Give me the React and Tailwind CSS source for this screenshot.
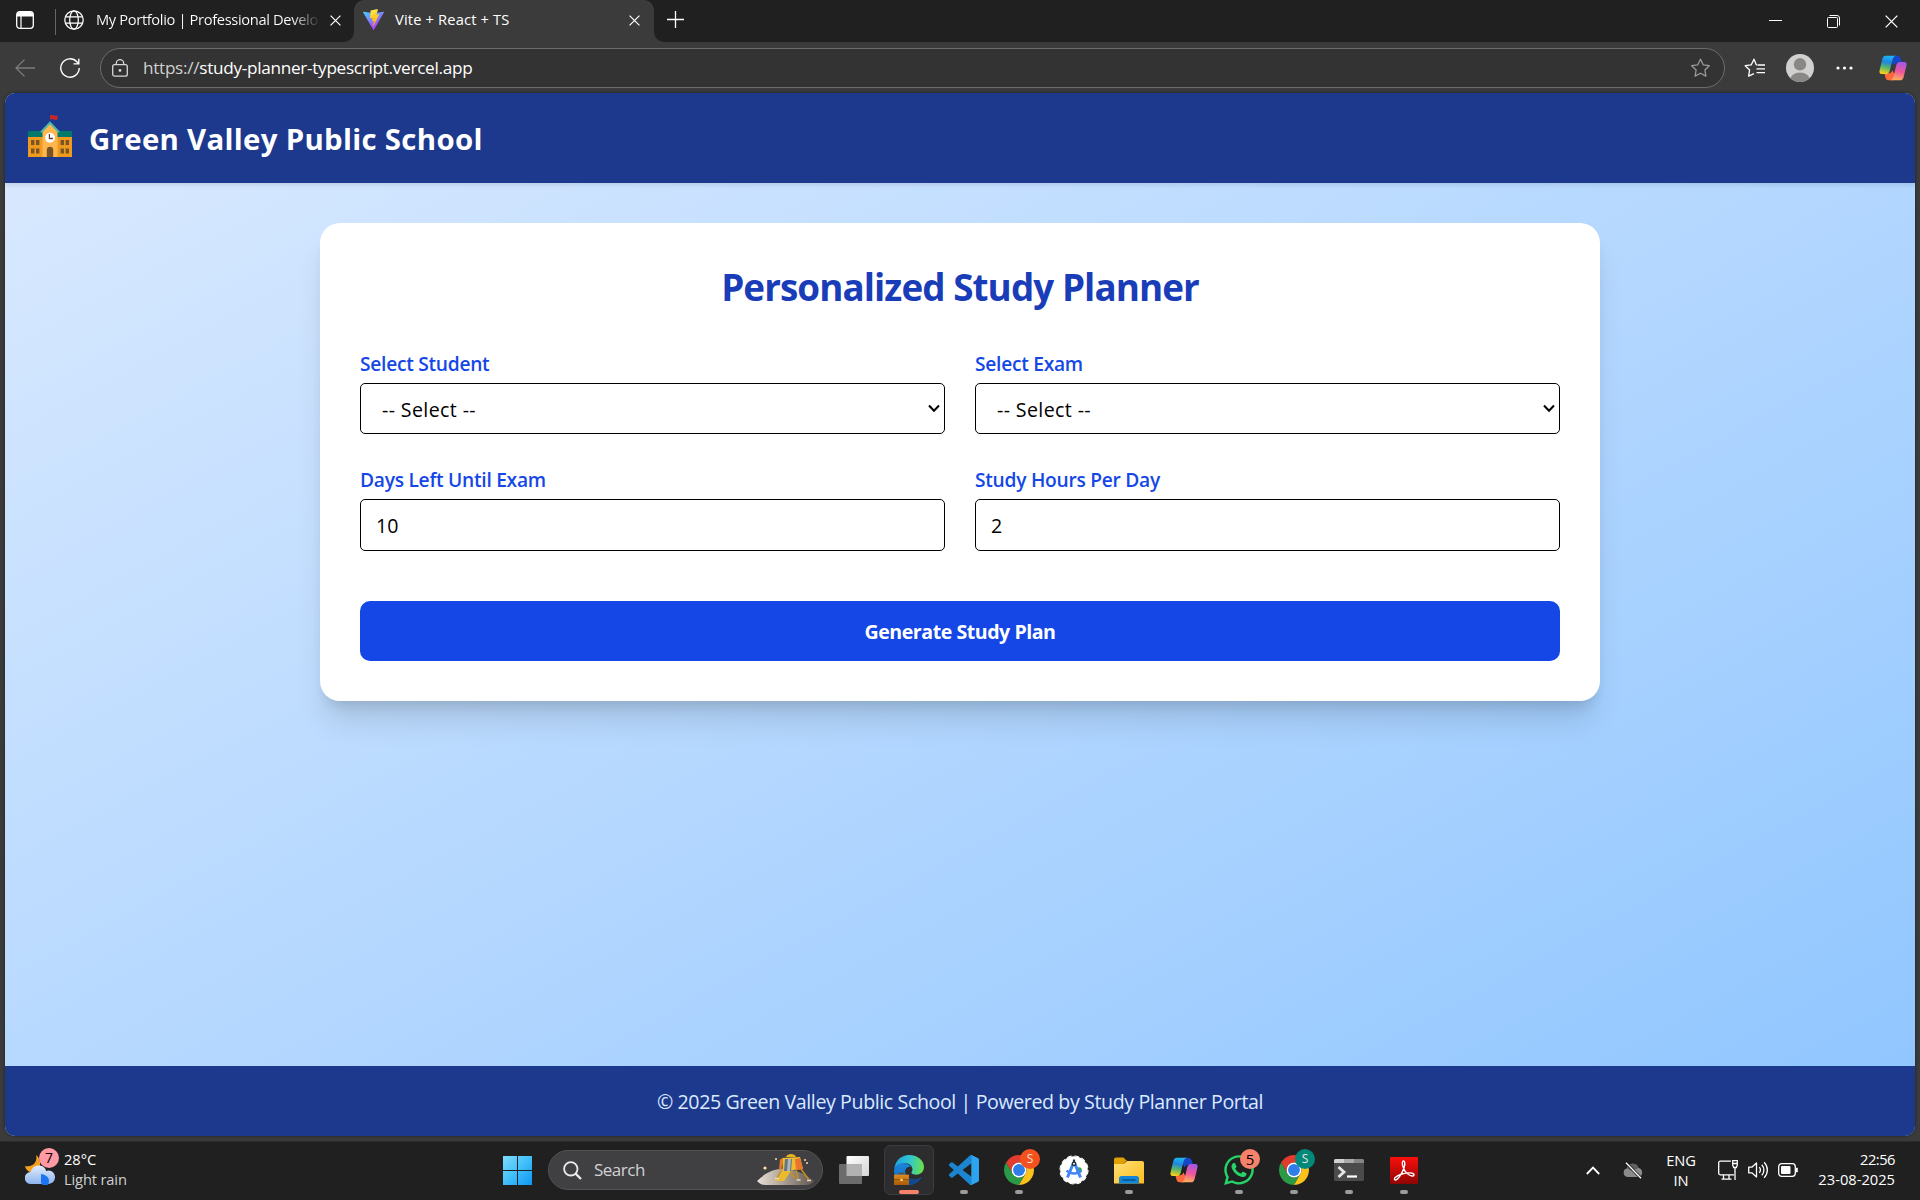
import React from 'react';
import { FaWhatsapp } from 'react-icons/fa';

function Cross({ size = 12, w = 1.3 }) {
  return (
    <svg width={size} height={size} viewBox="0 0 12 12" stroke="#fff" strokeWidth={w} fill="none">
      <path d="M.6.6l10.8 10.8M11.4.6L.6 11.4" />
    </svg>
  );
}

function ViteLogo() {
  return (
    <svg width="21" height="21" viewBox="0 0 32 32">
      <defs>
        <linearGradient id="va" x1="0" y1="0" x2=".6" y2="1"><stop offset="0" stopColor="#41d1ff" /><stop offset="1" stopColor="#bd34fe" /></linearGradient>
        <linearGradient id="vb" x1=".4" y1="0" x2=".6" y2="1"><stop offset="0" stopColor="#ffea83" /><stop offset=".2" stopColor="#ffdd35" /><stop offset="1" stopColor="#ffa800" /></linearGradient>
      </defs>
      <path fill="url(#va)" d="M31.8 5.3L16.9 31.4a.9.9 0 0 1-1.5 0L.2 5.3a.9.9 0 0 1 .9-1.3l14.9 2.6L30.900 4a.9.9 0 0 1 .9 1.300Z" />
      <path fill="url(#vb)" d="M22.300 0L11.800 2.100a.4.4 0 0 0-.3.4l-.7 11.400c0 .300.200.500.500.400l2.900-.7c.3-.1.5.200.5.500l-.9 4.300c0 .300.200.500.500.400l1.800-.5c.3-.1.6.200.5.500l-1.400 6.600c-.1.400.500.600.700.300l.1-.2 8.500-16.900c.100-.3-.1-.6-.5-.5l-3 .6c-.3 0-.5-.2-.4-.5l2-6.700c0-.3-.2-.6-.500-.5Z" />
    </svg>
  );
}

function SchoolIcon() {
  return (
    <svg width="44" height="42" viewBox="0 0 44 42">
      <path d="M22 0c2.500-.8 4 1.400 7.500.4v4.200c-3.500 1-5-1-7.500-.2Z" fill="#c62828" />
      <rect x="0" y="16" width="44" height="7" fill="#00796b" />
      <rect x="0" y="22" width="44" height="20" fill="#ef9a1f" />
      <path d="M14.500 42V15.500L22 8l7.500 7.500V42Z" fill="#ffb74d" />
      <path d="M13 17.200L22 7.800l9 9.400" fill="none" stroke="#4db6ac" strokeWidth="2" />
      <circle cx="22" cy="22.700" r="5" fill="#fff" />
      <path d="M22 19v3.700h3v1.600h-4.200V19Z" fill="#5d4037" />
      <path d="M18.800 42v-7a3.200 3.200 0 0 1 6.400 0V42Z" fill="#795526" />
      <g fill="#795526">
        <rect x="3" y="25" width="3.400" height="5" /><rect x="8" y="25" width="3.400" height="5" />
        <rect x="3" y="33.500" width="3.400" height="5" /><rect x="8" y="33.500" width="3.400" height="5" />
        <rect x="32.600" y="25" width="3.400" height="5" /><rect x="37.600" y="25" width="3.400" height="5" />
        <rect x="32.600" y="33.500" width="3.400" height="5" /><rect x="37.600" y="33.500" width="3.400" height="5" />
      </g>
    </svg>
  );
}

function Copilot({ id }) {
  return (
    <svg width="28" height="26" viewBox="0 0 84 78">
      <defs>
        <linearGradient id={id + 'l'} x1=".5" y1="0" x2=".3" y2="1"><stop offset="0" stopColor="#1eb8f2" /><stop offset=".35" stopColor="#1f86e0" /><stop offset=".65" stopColor="#5bb865" /><stop offset="1" stopColor="#ffd21a" /></linearGradient>
        <linearGradient id={id + 'r'} x1=".6" y1="0" x2=".4" y2="1"><stop offset="0" stopColor="#a457e8" /><stop offset=".5" stopColor="#f0559a" /><stop offset="1" stopColor="#ffb15a" /></linearGradient>
      </defs>
      <path d="M42 2H55C61 2 64 6 66 12L69 23H54C49 23 46 27 44 32L38 20Z" fill="#1747c8" />
      <path d="M42 76H29C23 76 20 72 19 66L16 55H30C35 55 38 51 40 46L46 58Z" fill="#ff6a3d" />
      <path d="M20 2H52C46 2 43 6 41 12L32 48C30 54 27 57 22 57H8C2 57 0 52 2 45L10 12C12 5 15 2 20 2Z" fill={`url(#${id}l)`} />
      <path d="M64 76H32C38 76 41 72 43 66L52 30C54 24 57 21 62 21H76C82 21 84 26 82 33L74 66C72 73 69 76 64 76Z" fill={`url(#${id}r)`} />
    </svg>
  );
}

function TitleBar() {
  return (
    <div className="flex h-[42px] bg-[#202020]">
      <div className="flex w-[354px] shrink-0 items-start">
        <svg className="mt-[11px] ml-4" width="18" height="18" viewBox="0 0 18 18" fill="none">
          <rect x=".7" y=".7" width="16.600" height="16.600" rx="3" stroke="#fff" strokeWidth="1.300" />
          <path d="M1 5V3.500A2.500 2.500 0 0 1 3.500 1h11A2.500 2.500 0 0 1 17 3.500V5.500H1Z" fill="#fff" />
          <path d="M5 5v12" stroke="#fff" strokeWidth="1.200" />
        </svg>
        <div className="mt-[9px] ml-[21px] h-[26px] w-px bg-[#666]" />
        <svg className="mt-[10px] ml-2" width="20" height="20" viewBox="0 0 20 20" fill="none" stroke="#fff" strokeWidth="1.250">
          <circle cx="10" cy="10" r="9.200" /><ellipse cx="10" cy="10" rx="4.300" ry="9.200" /><path d="M1.600 6.800h16.800M1.600 13.200h16.800" />
        </svg>
        <div className="mt-[9px] ml-3 w-[223px] overflow-hidden whitespace-nowrap bg-linear-to-r from-white from-88% to-[#303030] bg-clip-text text-[14.7px] leading-5 tracking-[-0.36px] text-transparent">My Portfolio | Professional Develo</div>
        <div className="mt-[15px] ml-[11px]"><Cross size={11} /></div>
      </div>
      <div className="relative flex w-[300px] shrink-0 items-start rounded-t-[10px] bg-[#3b3b3b]">
        <svg className="absolute bottom-0 -left-[10px]" width="10" height="10"><path d="M10 0v10H0A10 10 0 0 0 10 0Z" fill="#3b3b3b" /></svg>
        <svg className="absolute -right-[10px] bottom-0" width="10" height="10"><path d="M0 0v10h10A10 10 0 0 1 0 0Z" fill="#3b3b3b" /></svg>
        <div className="mt-[9px] ml-[9px]"><ViteLogo /></div>
        <div className="mt-[9px] ml-[11px] flex-1 text-[14.7px] leading-5 tracking-[0.15px] text-white">Vite + React + TS</div>
        <div className="mt-[15px] mr-[14px]"><Cross size={11} /></div>
      </div>
      <svg className="mt-[11px] ml-[13px]" width="17" height="17" viewBox="0 0 17 17" stroke="#fff" strokeWidth="1.300"><path d="M8.500 0v17M0 8.500h17" /></svg>
      <div className="ml-auto flex items-start pr-[22px]">
        <svg className="mt-[20px]" width="13" height="2"><path d="M0 .5h13" stroke="#fff" /></svg>
        <svg className="mt-[15px] ml-[45px]" width="13" height="13" viewBox="0 0 13 13" fill="none" stroke="#fff"><rect x=".5" y="2.500" width="10" height="10" rx="1" /><path d="M2.500.5H10A2.500 2.500 0 0 1 12.500 3v7.500" /></svg>
        <div className="mt-[15px] ml-[45px]"><Cross size={13} w={1.2} /></div>
      </div>
    </div>
  );
}

const STAR = 'M10 1.200l2.700 5.600 6.100.9-4.400 4.300 1 6.100L10 15.200l-5.400 2.900 1-6.100L1.200 7.700l6.100-.9Z';

function AddressBar() {
  return (
    <div className="flex h-[51px] items-center bg-[#3b3b3b]">
      <svg className="ml-[15px]" width="20" height="18" viewBox="0 0 20 18" fill="none" stroke="#7d7d7d" strokeWidth="1.300"><path d="M20 9H1M9.500.6L1 9l8.500 8.400" /></svg>
      <svg className="ml-[25px]" width="20" height="20" viewBox="0 0 20 20" fill="none" stroke="#fff" strokeWidth="1.400"><path d="M19.200 10A9.200 9.200 0 1 1 16.800 3.800L18.500 5.700M18.800.8V5.900H13.500" /></svg>
      <div className="ml-5 flex h-10 w-[1625px] items-center rounded-full border border-[#6d6d6d] bg-[#333]">
        <svg className="ml-[11px]" width="16" height="18" viewBox="0 0 16 18" fill="none" stroke="#d6d6d6" strokeWidth="1.300"><rect x=".7" y="5.700" width="14.600" height="11.500" rx="2" /><path d="M4.300 5.500V4.300a3.700 3.700 0 0 1 7.400 0v1.200" /><circle cx="8" cy="11.400" r=".8" fill="#fff" /></svg>
        <div className="ml-[15px] flex-1 text-[17.2px] leading-6 tracking-[-0.3px] text-white"><span className="text-[#cfcfcf]">https://</span>study-planner-typescript.vercel.app</div>
        <svg className="mr-[13px]" width="21" height="20" viewBox="0 0 20 20" fill="none" stroke="#9a9a9a" strokeWidth="1.300" strokeLinejoin="round"><path d={STAR} /></svg>
      </div>
      <svg className="ml-[19px]" width="21" height="20" viewBox="0 0 21 20" fill="none" stroke="#fff" strokeWidth="1.300" strokeLinejoin="round"><path d="M13 7L12.300 6.800 10 1.200 7.300 6.800l-6.100.9 4.400 4.300-1 6.100L10 15.600M13.500 7H21M12.500 10.800H21M12.500 14.600H21" /></svg>
      <svg className="ml-[21px]" width="28" height="28" viewBox="0 0 28 28"><defs><clipPath id="av"><circle cx="14" cy="14" r="14" /></clipPath></defs><circle cx="14" cy="14" r="14" fill="#d2d0ce" /><g clipPath="url(#av)" fill="#8a8886"><circle cx="14" cy="10.300" r="6.200" /><ellipse cx="14" cy="26" rx="10" ry="7.500" /></g></svg>
      <svg className="ml-[22px]" width="17" height="4" fill="#fff"><circle cx="2" cy="2" r="1.600" /><circle cx="8.500" cy="2" r="1.600" /><circle cx="15" cy="2" r="1.600" /></svg>
      <div className="ml-[26px]"><Copilot id="ct" /></div>
    </div>
  );
}

function Field({ label, children }) {
  return (
    <label className="block">
      <span className="mb-[5px] block h-[30px] pt-px text-[19.2px] leading-[30px] font-semibold tracking-[-0.27px] text-[#1447e6]">{label}</span>
      {children}
    </label>
  );
}

function SelectBox() {
  return (
    <span className="relative block h-[51px]">
      <select className="block h-full w-full appearance-none rounded-[5px] border border-black bg-white pt-[2px] pl-[21px] text-[19.6px] tracking-[0.38px] text-black outline-none">
        <option>-- Select --</option>
      </select>
      <svg className="absolute top-[21px] right-[5px]" width="12" height="9" viewBox="0 0 12 9" fill="none" stroke="#000" strokeWidth="2"><path d="M1 1.500l5 5.300 5-5.300" /></svg>
    </span>
  );
}

function NumberBox({ value }) {
  return <input className="block h-[52px] w-full rounded-[5px] border border-black bg-white px-[15px] text-[19.6px] text-black outline-none" defaultValue={value} />;
}

function Page() {
  return (
    <div className="flex h-[1048px] bg-[#3b3b3b] px-[5px] pb-[5px]">
      <div className="flex flex-1 flex-col overflow-hidden rounded-[10px] bg-linear-to-br from-[#dbeafe] to-[#8ec5ff] shadow-[0_0_3px_rgba(0,0,0,0.5)]">
        <header className="flex h-[90px] shrink-0 items-center bg-[#1c398e] pl-[23px] shadow-[0_2px_4px_rgba(0,0,0,0.1)]">
          <div className="-mt-1"><SchoolIcon /></div>
          <h1 className="mt-[2px] ml-[17px] text-[29.4px] leading-10 font-bold tracking-[0.3px] text-white">Green Valley Public School</h1>
        </header>
        <main className="flex-1 pt-10">
          <div className="mx-auto h-[478px] w-[1280px] rounded-[20px] bg-white px-10 pt-[42px] shadow-[0_25px_31px_-6px_rgba(0,0,0,0.12),0_10px_13px_-6px_rgba(0,0,0,0.12)]">
            <h2 className="mb-[38px] text-center text-[36.8px] leading-[45px] font-bold tracking-[-0.92px] text-[#193cb8]">Personalized Study Planner</h2>
            <div className="grid grid-cols-2 gap-[30px]">
              <Field label="Select Student"><SelectBox /></Field>
              <Field label="Select Exam"><SelectBox /></Field>
              <Field label="Days Left Until Exam"><NumberBox value="10" /></Field>
              <Field label="Study Hours Per Day"><NumberBox value="2" /></Field>
            </div>
            <button className="mt-[50px] block h-[60px] w-full rounded-[10px] bg-[#1447e6] pt-[2px] text-[19.6px] font-bold tracking-[-0.47px] text-white">Generate Study Plan</button>
          </div>
        </main>
        <footer className="flex h-[70px] shrink-0 items-center justify-center bg-[#1c398e] pt-[2px] text-[19.6px] tracking-[-0.39px] text-[#dbeafe]">© 2025 Green Valley Public School | Powered by Study Planner Portal</footer>
      </div>
    </div>
  );
}

function Chrome({ letter, badge }) {
  return (
    <div className="relative">
      <svg width="30" height="30" viewBox="2 2 44 44">
        <path d="M4.950 13A22 22 0 0 1 43.050 13H24A11 11 0 0 0 14.470 29.500Z" fill="#e33b2e" />
        <path d="M4.950 13L14.470 29.500A11 11 0 0 0 33.530 29.500L24 46A22 22 0 0 1 4.950 13Z" fill="#2a9a47" />
        <path d="M43.050 13A22 22 0 0 1 24 46L33.530 29.500A11 11 0 0 0 24 13Z" fill="#fcc21b" />
        <circle cx="24" cy="24" r="11" fill="#fff" /><circle cx="24" cy="24" r="8.700" fill="#2f7de9" />
      </svg>
      <span className={`absolute -top-[6px] -right-[6px] flex size-5 items-center justify-center rounded-full text-[12px] leading-none text-[#f3e3dc] ${badge}`}>{letter}</span>
    </div>
  );
}

function Edge() {
  return (
    <svg width="30" height="30" viewBox="0 0 90 90">
      <defs>
        <linearGradient id="e1" x1="0" y1=".3" x2="1" y2=".4"><stop offset="0" stopColor="#1f9fe0" /><stop offset=".5" stopColor="#2fc6d2" /><stop offset="1" stopColor="#6be04a" /></linearGradient>
        <linearGradient id="e2" x1="0" y1="0" x2="0" y2="1"><stop offset="0" stopColor="#1b86dc" /><stop offset="1" stopColor="#1265bd" /></linearGradient>
        <linearGradient id="e3" x1="0" y1="0" x2="0" y2="1"><stop offset="0" stopColor="#e08a1e" /><stop offset="1" stopColor="#a85a0a" /></linearGradient>
      </defs>
      <path d="M1 45C1 20 20 0 46 0c26 0 44 18 44 36 0 15-11 23-24 23-10 0-15-4-13-8 6-7 2-26-20-26C15 25 3 34 1 45Z" fill="url(#e1)" />
      <path d="M0 47c2-15 16-23 30-22 10 1 18 5 22 12-14-6-22 8-17 20 5 14 22 21 36 15 5-2 9-3 11-5C74 81 60 90 45 90 18 90-1 70 0 47Z" fill="url(#e2)" />
      <path d="M35 57c5 14 22 21 36 15 5-2 9-3 11-5C74 81 60 90 45 90Z" fill="#0d4a91" />
      <path d="M15 60v-5h15v5" fill="none" stroke="#7a4208" strokeWidth="3" />
      <rect x="0" y="59" width="45" height="31" fill="url(#e3)" /><path d="M0 74h45" stroke="#6f3c06" strokeWidth="2" /><rect x="19" y="71" width="7" height="7" fill="#ffd76a" />
    </svg>
  );
}

function VsCode() {
  return (
    <svg width="30" height="30" viewBox="0 0 100 100">
      <path fillRule="evenodd" fill="#1b86cf" d="M96.500 10.800L75.900.9a6.200 6.200 0 0 0-7.100 1.200L29.300 38.100 12.100 25a4.200 4.200 0 0 0-5.300.2L1.300 30.300a4.200 4.200 0 0 0 0 6.200L16.200 50 1.300 63.600a4.200 4.200 0 0 0 0 6.200l5.500 5a4.200 4.200 0 0 0 5.300.2l17.200-13L68.800 98a6.200 6.200 0 0 0 7.100 1.200l20.600-9.900a6.300 6.300 0 0 0 3.500-5.600V16.400a6.300 6.300 0 0 0-3.500-5.600zM75 72.700L45.100 50 75 27.300z" />
      <path fill="#2fa4ee" d="M75.900.9l20.600 9.900a6.300 6.300 0 0 1 3.500 5.600v67.300a6.300 6.300 0 0 1-3.500 5.600L75.900 99.200a6.200 6.200 0 0 1-7.100-1.200c2.300 2.300 6.200.7 6.200-2.600V4.700c0-3.300-3.900-4.900-6.200-2.600A6.200 6.200 0 0 1 75.900.9Z" />
    </svg>
  );
}

function AndroidStudio() {
  return (
    <svg width="30" height="30" viewBox="0 0 30 30">
      <circle cx="15" cy="15" r="13.800" fill="#fff" /><circle cx="15" cy="15" r="14" fill="none" stroke="#fff" strokeWidth="1.200" strokeDasharray="4.400 2.930" />
      <circle cx="20" cy="15" r="2.800" fill="#34a853" />
      <path d="M14 9L8.500 22.500M16 9L21.500 22.500" stroke="#4285f4" strokeWidth="3" fill="none" />
      <path d="M7.500 15.500c4 4 11 4 15 0" stroke="#4285f4" strokeWidth="2.400" fill="none" />
      <circle cx="15" cy="8.800" r="1.700" fill="#fff" stroke="#202b36" strokeWidth="1.400" /><path d="M15 4.500v3" stroke="#202b36" strokeWidth="2.200" />
    </svg>
  );
}

function Explorer() {
  return (
    <svg width="30" height="27" viewBox="0 0 30 27">
      <defs><linearGradient id="fx" x1="0" y1="0" x2="1" y2="1"><stop offset="0" stopColor="#ffdf76" /><stop offset="1" stopColor="#fcbc1c" /></linearGradient></defs>
      <path d="M0 2.500A2 2 0 0 1 2 .5h7.500L13 4H0Z" fill="#e0a000" />
      <path d="M0 7h9.500L13 4h15a2 2 0 0 1 2 2v20.500H0Z" fill="url(#fx)" />
      <path d="M0 3.500h12.500L9.500 7H0Z" fill="#e0a000" />
      <path d="M5 26.500V21.500a2.500 2.500 0 0 1 2.500-2.500h15a2.500 2.500 0 0 1 2.500 2.500v5Z" fill="#1285d8" /><path d="M8.500 23h13" stroke="#0a4f8c" strokeWidth="1.500" />
    </svg>
  );
}

function Terminal() {
  return (
    <svg width="30" height="22" viewBox="0 0 30 22">
      <rect width="30" height="22" rx="1.500" fill="#4b4b4b" /><path d="M0 4V1.500A1.500 1.500 0 0 1 1.500 0H10v4Z" fill="#d0d0d0" /><rect x="10" width="10" height="4" fill="#aaa" /><path d="M20 0h8.500A1.500 1.500 0 0 1 30 1.500V4H20Z" fill="#858585" />
      <path d="M4.500 8l5.500 5-5.500 5" fill="none" stroke="#e6e6e6" strokeWidth="2.800" /><path d="M13 17.500h10" stroke="#fff" strokeWidth="2.200" />
    </svg>
  );
}

function Acrobat() {
  return (
    <svg width="28" height="27" viewBox="0 0 28 27">
      <defs><linearGradient id="ac" x1="0" y1="0" x2="0" y2="1"><stop offset="0" stopColor="#fb0f0c" /><stop offset="1" stopColor="#8e0503" /></linearGradient></defs>
      <rect width="28" height="27" rx="1" fill="url(#ac)" />
      <path d="M13.300 10.500C11.500 6 12.500 4 13.500 4s2 2 .6 6.500C12.500 15.500 8 23 5.500 23c-2.500-.5-.5-4 6.500-6 6-1.800 12-1.400 12 .8 0 2-3.500 1.500-6.500-1-2-1.500-3.500-4-4.200-6.300Z" fill="none" stroke="#fff" strokeWidth="1.400" />
    </svg>
  );
}

function Cell({ active, dot = true, children }) {
  return (
    <div className={`relative flex size-[50px] shrink-0 items-center justify-center rounded-[6px] ${active ? 'border border-[#3c3c3e] bg-[#2d2d2f]' : ''}`}>
      {children}
      {dot && <span className={`absolute rounded-full ${active ? 'bottom-0 h-1 w-5 bg-[#f7826b]' : 'bottom-px h-1 w-2 bg-[#9b9b9b]'}`} />}
    </div>
  );
}

function Lander() {
  return (
    <svg width="58" height="32" viewBox="0 0 58 32">
      <defs>
        <linearGradient id="mo" x1="0" y1="0" x2="1" y2="0"><stop offset="0" stopColor="#e8e0d6" /><stop offset=".5" stopColor="#a89c90" /><stop offset="1" stopColor="#5f564e" /></linearGradient>
      </defs>
      <path d="M0 27C8 19 18 14 29 15c12 1 22 7 28 12-2 3-5 4-8 4H8c-4 0-6-2-8-4Z" fill="url(#mo)" />
      <path d="M29 3c1-4 9-4 10 0Z" fill="#e8b21c" />
      <path d="M25 4l18-1 3 12-20 2Z" fill="#f0bd2a" /><path d="M38 5l5-1 3 11-7 1Z" fill="#ea7430" /><path d="M23 5.500L26 4l-1.500 11.500L22 16Z" fill="#e87830" />
      <path d="M28 5h7l-1 12h-7Z" fill="#667584" /><path d="M31 5h3l-1 12h-3Z" fill="#a9b8c2" />
      <path d="M25 17h9L27 27H17.500Z" fill="#e9bb2e" /><path d="M24 17l-4 7M39 16l2 9M44 15l8 11M33 18l5 6" stroke="#c98f1a" strokeWidth="1.500" />
      <path d="M18 24.500h4M39.500 26h4M50 26.500h4" stroke="#dcdcdc" strokeWidth="1.600" />
      <g fill="#ffdf9e"><circle cx="8" cy="14" r="1.600" /><circle cx="19" cy="5" r="1" /><circle cx="48" cy="6" r="1" /><circle cx="50" cy="9" r="1" /></g>
    </svg>
  );
}

function Taskbar() {
  return (
    <div className="flex h-[59px] items-center border-t border-[#2b2b2b] bg-[#202021] pb-[2px] text-[14.7px] leading-5 text-white">
      <div className="flex w-[492px] items-center pl-[25px]">
        <div className="relative">
          <svg width="30" height="30" viewBox="0 0 30 30">
            <defs><linearGradient id="cl" x1="0" y1="0" x2="0" y2="1"><stop offset="0" stopColor="#e4edfb" /><stop offset="1" stopColor="#8db4ee" /></linearGradient></defs>
            <path d="M11 0c2 6-3 13-11 11 1 5 6 8 11 5 5-2 6-12 0-16Z" fill="#f3a01c" />
            <path d="M6 29a6 6 0 0 1-.5-12C7 12 11 10 14.500 10.500 19 11 21 14 21 16c5-2 9 2 9 6 0 5-4 7-7 7Z" fill="url(#cl)" />
            <path d="M16 19c6 1 8 4 8 7.500a4 4 0 0 1-8 0Z" fill="#1b74f0" />
          </svg>
          <span className="absolute -top-[7px] left-[14px] flex size-5 items-center justify-center rounded-full bg-[#ff99a4] text-[14px] leading-none text-black">7</span>
        </div>
        <div className="-mt-[3px] ml-[9px]">
          <div className="tracking-[-0.05px]">28°C</div>
          <div className="tracking-[-0.15px] text-[#cfcfcf]">Light rain</div>
        </div>
      </div>
      <div className="flex items-center gap-[5px]">
        <Cell dot={false}>
          <svg width="29" height="29" viewBox="0 0 29 29"><defs><linearGradient id="wn" gradientUnits="userSpaceOnUse" x1="0" y1="0" x2="29" y2="29"><stop offset="0" stopColor="#7fdcff" /><stop offset=".5" stopColor="#41bff9" /><stop offset="1" stopColor="#0d97f5" /></linearGradient></defs><path fill="url(#wn)" d="M0 0h14v14H0zM15 0h14v14H15zM0 15h14v14H0zM15 15h14v14H15z" /></svg>
        </Cell>
        <div className="mx-px flex h-10 w-[275px] items-center overflow-hidden rounded-full border border-[#535356] bg-[#404043]">
          <svg className="ml-[14px]" width="19" height="19" viewBox="0 0 19 19" fill="none" stroke="#ebebeb"><circle cx="7.800" cy="7.800" r="6.700" strokeWidth="1.800" /><path d="M12.600 12.600l5.400 5.400" strokeWidth="2.300" /></svg>
          <span className="ml-3 flex-1 text-[17px] tracking-[-0.5px] text-[#d2d2d3]">Search</span>
          <div className="mr-[7px]"><Lander /></div>
        </div>
        <Cell dot={false}>
          <svg width="30" height="28" viewBox="0 0 30 28"><defs><linearGradient id="tv" x1="0" y1="0" x2="1" y2="1"><stop offset="0" stopColor="#fff" /><stop offset="1" stopColor="#d5d5d5" /></linearGradient></defs><rect x="7.500" y="0" width="22.500" height="20" rx="1" fill="url(#tv)" /><rect x="0" y="8" width="23" height="20" rx="1" fill="#6c6c6c" /><path d="M7.500 8H23v12H7.500Z" fill="#b2b2b2" /></svg>
        </Cell>
        <Cell active><Edge /></Cell>
        <Cell><VsCode /></Cell>
        <Cell><Chrome letter="S" badge="bg-[#f4511e]" /></Cell>
        <Cell dot={false}><AndroidStudio /></Cell>
        <Cell><Explorer /></Cell>
        <Cell dot={false}><Copilot id="cb" /></Cell>
        <Cell>
          <FaWhatsapp className="text-[#25d366]" size={34} />
          <span className="absolute top-[4px] right-[4px] flex size-5 items-center justify-center rounded-full bg-[#f7826b] text-[15px] leading-none text-black">5</span>
        </Cell>
        <Cell><Chrome letter="S" badge="bg-[#00897b]" /></Cell>
        <Cell><Terminal /></Cell>
        <Cell><Acrobat /></Cell>
      </div>
      <div className="ml-auto flex items-center pr-[25px]">
        <svg width="14" height="9" viewBox="0 0 14 9" fill="none" stroke="#fff" strokeWidth="1.800"><path d="M.8 8L7 1.600 13.200 8" /></svg>
        <svg className="ml-[23px]" width="20" height="17" viewBox="0 0 20 17"><path d="M4.500 15A4.500 4.500 0 0 1 4 6.200 6 6 0 0 1 15.500 6 4.600 4.600 0 0 1 15.500 15Z" fill="#8b8b8b" /><path d="M4 6.200A6 6 0 0 1 15.500 6L9 9Z" fill="#5f5f5f" /><path d="M3 .8l15 15.400" stroke="#202021" strokeWidth="3" /><path d="M3 .8l15 15.400" stroke="#fff" strokeWidth="1.300" /></svg>
        <div className="-mt-px ml-[21px] w-[34px] text-center tracking-[-0.2px]"><div>ENG</div><div>IN</div></div>
        <svg className="ml-5" width="20" height="20" viewBox="0 0 20 20" fill="none" stroke="#fff" strokeWidth="1.300"><path d="M13 1.200H2.200A1.500 1.500 0 0 0 .7 2.700v10.600a1.500 1.500 0 0 0 1.500 1.500H16M5.500 15v4M11 15v4M3.500 19.200h10M17 8v12" /><path d="M14.700.7h4.600v4.500l-1 2.300h-2.600l-1-2.300ZM14.700 3.500h4.600" /></svg>
        <svg className="ml-[10px]" width="20" height="18" viewBox="0 0 20 18" fill="none" stroke="#fff" strokeWidth="1.300" strokeLinejoin="round"><path d="M.7 6.200h3.100L8.500 2v14l-4.700-4.200H.7ZM11.300 6.200c1.400 1.700 1.400 3.900 0 5.600M13.800 3.700c2.800 3.100 2.800 7.500 0 10.600M16.200 1.200c4.200 4.600 4.200 11 0 15.600" /></svg>
        <svg className="ml-[10px]" width="20" height="14" viewBox="0 0 20 14" fill="none" stroke="#fff" strokeWidth="1.300"><rect x=".7" y=".7" width="16.600" height="12.600" rx="3" /><rect x="3" y="3" width="9.500" height="8" rx="1" fill="#fff" stroke="none" /><path d="M18.800 4.800v4.400" strokeWidth="2" /></svg>
        <div className="-mt-[3px] ml-5 w-[77px] text-right whitespace-nowrap"><div className="tracking-[-0.5px]">22:56</div><div>23-08-2025</div></div>
      </div>
    </div>
  );
}

export default function App() {
  return (
    <div className="h-[1200px] w-[1920px] overflow-hidden bg-[#202020] font-['Open_Sans','Noto_Sans',sans-serif]">
      <TitleBar />
      <AddressBar />
      <Page />
      <Taskbar />
    </div>
  );
}
